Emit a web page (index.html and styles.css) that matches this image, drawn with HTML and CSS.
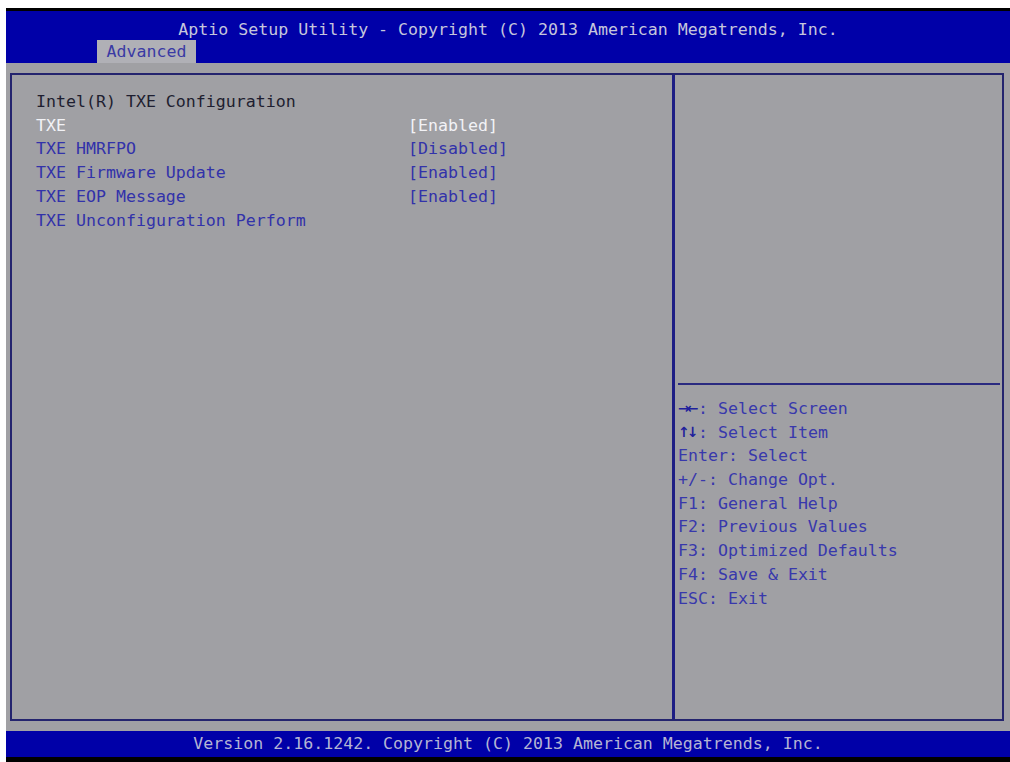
FILE: index.html
```html
<!DOCTYPE html>
<html>
    <head>
        <title>Aptio Setup Utility</title>
        <link rel="stylesheet" href="styles.css">
    </head>
    <body>
        <div id="screen">
            <div id="topbar">
                <p class="title">Aptio Setup Utility - Copyright (C) 2013 American Megatrends, Inc.</p>
                <span class="tab">Advanced</span>
            </div>
            <div id="main">
                <div id="box">
                    <div id="settings">
                        <p class="heading">Intel(R) TXE Configuration</p>
                        <div class="item selected">
                            <span>TXE</span>
                            <span>[Enabled]</span>
                        </div>
                        <div class="item">
                            <span>TXE HMRFPO</span>
                            <span>[Disabled]</span>
                        </div>
                        <div class="item">
                            <span>TXE Firmware Update</span>
                            <span>[Enabled]</span>
                        </div>
                        <div class="item">
                            <span>TXE EOP Message</span>
                            <span>[Enabled]</span>
                        </div>
                        <div class="item">
                            <span>TXE Unconfiguration Perform</span>
                            <span></span>
                        </div>
                    </div>
                    <div id="side">
                        <div class="help-top"></div>
                        <ul class="keys">
                            <li><b class="arrows">&rarr;&larr;</b>: Select Screen</li>
                            <li><b class="arrows">&uarr;&darr;</b>: Select Item</li>
                            <li>Enter: Select</li>
                            <li>+/-: Change Opt.</li>
                            <li>F1: General Help</li>
                            <li>F2: Previous Values</li>
                            <li>F3: Optimized Defaults</li>
                            <li>F4: Save &amp; Exit</li>
                            <li>ESC: Exit</li>
                        </ul>
                    </div>
                </div>
            </div>
            <div id="footer">Version 2.16.1242. Copyright (C) 2013 American Megatrends, Inc.</div>
        </div>
    </body>
</html>
```

FILE: styles.css
```css
body {
    margin: 8px 0 0 6px;
    background-color: #FFF;
    font-family: 'DejaVu Sans Mono', 'Liberation Mono', monospace;
    font-size: 16.6px;
}

div#screen {
    display: flex;
    flex-direction: column;
    width: 1004px;
    height: 754px;
}

div#topbar {
    display: flex;
    flex-direction: column;
    height: 52px;
    border-top: 3px solid #000;
    background-color: #0000a8;
}
div#topbar > p.title {
    margin: 8px 0 0 0;
    line-height: 21px;
    text-align: center;
    color: #c6c6dc;
}
div#topbar > span.tab {
    align-self: flex-start;
    margin-left: 91px;
    width: 99px;
    height: 23px;
    line-height: 24px;
    text-align: center;
    background-color: #b0b0b6;
    color: #3a3aa4;
}

div#main {
    flex: 1;
    padding: 10px 6px 10px 4px;
    background-color: #a0a0a4;
}
div#box {
    display: grid;
    grid-template-columns: 663px 1fr;
    height: 644px;
    border: 2px solid #24246e;
}

div#settings {
    padding: 15px 0 0 24px;
    border-right: 3px solid #1e1e84;
    line-height: 23.7px;
}
div#settings > p.heading {
    margin: 0;
    color: #1e1e30;
}
div#settings > div.item {
    display: grid;
    grid-template-columns: 372px auto;
    color: #3232aa;
}
div#settings > div.selected {
    color: #f2f2f6;
}

div#side > div.help-top {
    height: 308px;
    margin: 0 2px 0 3px;
    border-bottom: 2px solid #2a2a80;
}
ul.keys {
    margin: 0;
    padding: 12px 0 0 3px;
    list-style: none;
    line-height: 23.7px;
    color: #3838ac;
}
ul.keys > li {
    height: 23.7px;
}
ul.keys b.arrows {
    display: inline-block;
    width: 20px;
    vertical-align: top;
    line-height: 23.7px;
    font-family: 'DejaVu Sans', sans-serif;
    font-size: 14px;
    font-weight: bold;
    letter-spacing: -3px;
    color: #20209c;
}

div#footer {
    height: 26px;
    line-height: 26px;
    border-bottom: 5px solid #000;
    background-color: #0000a8;
    text-align: center;
    color: #b4b4d4;
}
```
